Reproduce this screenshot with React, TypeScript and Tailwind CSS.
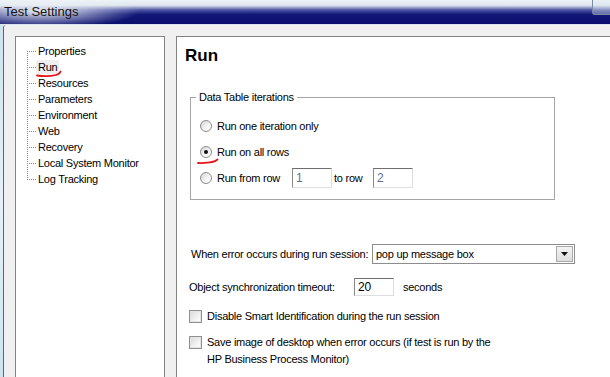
const treeItems = [
  "Properties",
  "Run",
  "Resources",
  "Parameters",
  "Environment",
  "Web",
  "Recovery",
  "Local System Monitor",
  "Log Tracking",
]

function TreeLine({ first, last }: { first: boolean; last: boolean }) {
  return (
    <svg width="9" height="16" className="shrink-0" shapeRendering="crispEdges">
      <line
        x1="0.5"
        y1={first ? 8 : 0}
        x2="0.5"
        y2={last ? 9 : 16}
        stroke="#8a8a8a"
        strokeDasharray="1 1"
      />
      <line x1="2" y1="8.5" x2="9" y2="8.5" stroke="#8a8a8a" strokeDasharray="1 1" />
    </svg>
  )
}

function Radio({ checked }: { checked?: boolean }) {
  return (
    <span className="flex h-[12px] w-[12px] shrink-0 items-center justify-center rounded-full border border-[#8c8c8c] bg-[linear-gradient(135deg,#d4d4d4,#f6f6f6_60%,#ffffff)]">
      {checked && <span className="h-[4px] w-[4px] rounded-full bg-[#111]" />}
    </span>
  )
}

function Checkbox() {
  return (
    <span className="flex h-[13px] w-[13px] shrink-0 items-center justify-center border border-[#8f8f8f] bg-white">
      <span className="h-[11px] w-[11px] border border-[#e4e4e4] bg-[linear-gradient(135deg,#dcdcdc,#f4f4f4_70%,#fdfdfd)]" />
    </span>
  )
}

function RedMark({ d, w, h }: { d: string; w: number; h: number }) {
  return (
    <svg width={w} height={h} className="pointer-events-none absolute">
      <path d={d} fill="none" stroke="#e3141c" strokeWidth="1.8" strokeLinecap="round" />
    </svg>
  )
}

// sunken, Win7-style edit box
const editBox =
  "flex w-[40px] items-center border border-b-[#dedede] border-l-[#8a8a8a] border-r-[#dedede] border-t-[#6e6e6e] bg-white pl-[3px] text-[12px]"

export default function App() {
  return (
    <div className="flex h-[377px] w-[610px] flex-col overflow-hidden bg-[#f0f0f0] font-['Liberation_Sans',Arial,sans-serif] text-[11px] tracking-[-0.25px] text-black">
      {/* title bar */}
      <div className="flex h-6 shrink-0 items-start bg-[radial-gradient(ellipse_100px_17px_at_40px_11px,rgba(236,241,245,0.95),rgba(236,241,245,0)),linear-gradient(to_bottom,#edf3f6_0%,#e0e8ef_22%,#4a52a0_42%,#121878_60%,#0a0e6c_100%)]">
        <span className="pl-[4px] pt-[4px] text-[13px] leading-[15px] tracking-normal text-[#141414]">
          Test Settings
        </span>
        <span className="ml-auto mr-[-4px] h-[15px] w-[22px] rounded-bl-[3px] border border-t-0 border-[#7d8aa3] bg-[#dce8ef]/40" />
      </div>
      <div className="h-px shrink-0 bg-[#dbe4ee]" />

      <div className="flex min-h-0 flex-1">
        <div className="w-[3px] shrink-0 bg-[linear-gradient(to_bottom,#cfe2ef,#e6f1f8_50%,#cde3f1)]" />
        <div className="flex flex-1 gap-[11px] rounded-tl-[3px] border-l border-[#646464] bg-[#f0f0f0] pl-[11px] pt-[11px]">
          {/* tree */}
          <div className="h-[360px] w-[150px] shrink-0 border border-[#828282] bg-white pt-[6px]">
            {treeItems.map((item, i) => (
              <div key={item} className="flex h-4 items-center pl-[11px]">
                <TreeLine first={i === 0} last={i === treeItems.length - 1} />
                <span
                  className={`relative whitespace-nowrap px-[2px] leading-[14px] ${item === "Run" ? "bg-[#efefef]" : ""}`}
                >
                  {item}
                  {item === "Run" && (
                    <span className="absolute left-0 top-[10px]">
                      <RedMark w={26} h={8} d="M1 5.5 C 8 6.5, 16 6, 20 5 S 24 3, 24.5 1.5" />
                    </span>
                  )}
                </span>
              </div>
            ))}
          </div>

          {/* settings page */}
          <div className="h-[360px] w-[450px] shrink-0 border border-[#828282] bg-white pl-[8px] pt-[9px]">
            <div className="text-[17px] font-bold leading-5 tracking-normal">Run</div>

            <fieldset className="ml-[5px] mt-[24px] w-[365px] border border-[#a5a5a5] px-[5px] pb-[8px]">
              <legend className="px-[3px] leading-[14px]">Data Table iterations</legend>
              <div className="mt-[9px] flex h-[26px] items-center pl-[4px]">
                <Radio />
                <span className="ml-[5px]">Run one iteration only</span>
              </div>
              <div className="relative flex h-[26px] items-center pl-[4px]">
                <Radio checked />
                <span className="ml-[5px]">Run on all rows</span>
                <span className="absolute left-[1px] top-[19px]">
                  <RedMark w={22} h={7} d="M1 5 C 6 5.5, 11 4.5, 15 4 S 19 3, 20.5 1.5" />
                </span>
              </div>
              <div className="flex h-[26px] items-center pl-[4px]">
                <Radio />
                <span className="ml-[5px] w-[75px]">Run from row</span>
                <span className={`${editBox} h-[20px] text-[#5f6f8a]`}>1</span>
                <span className="ml-[2px] w-[39px]">to row</span>
                <span className={`${editBox} h-[20px] text-[#5f6f8a]`}>2</span>
              </div>
            </fieldset>

            <div className="ml-[6px] mt-[44px] flex h-[20px] items-center">
              <span className="w-[181px] shrink-0 whitespace-nowrap">When error occurs during run session:</span>
              <div className="flex h-[20px] w-[203px] items-center border border-[#8d8d8d] bg-white pl-[3px]">
                <span>pop up message box</span>
                <span className="ml-auto mr-px flex h-[16px] w-[17px] items-center justify-center border border-[#a8a8a8] bg-[linear-gradient(to_bottom,#f4f4f4,#dedede)]">
                  <svg width="7" height="4" viewBox="0 0 7 4">
                    <path d="M0 0h7L3.5 4z" fill="#111" />
                  </svg>
                </span>
              </div>
            </div>

            <div className="ml-[4px] mt-[14px] flex h-[18px] items-center">
              <span className="w-[165px] shrink-0 whitespace-nowrap">Object synchronization timeout:</span>
              <span className={`${editBox} h-[18px]`}>20</span>
              <span className="ml-[9px]">seconds</span>
            </div>

            <div className="ml-[4px] mt-[12px] flex h-[16px] items-center">
              <Checkbox />
              <span className="ml-[5px] whitespace-nowrap">Disable Smart Identification during the run session</span>
            </div>

            <div className="ml-[4px] mt-[10px] flex items-start">
              <span className="mt-[2px]">
                <Checkbox />
              </span>
              <span className="ml-[5px] whitespace-nowrap leading-[17px]">
                Save image of desktop when error occurs (if test is run by the
                <br />
                HP Business Process Monitor)
              </span>
            </div>
          </div>
        </div>
      </div>
    </div>
  )
}
